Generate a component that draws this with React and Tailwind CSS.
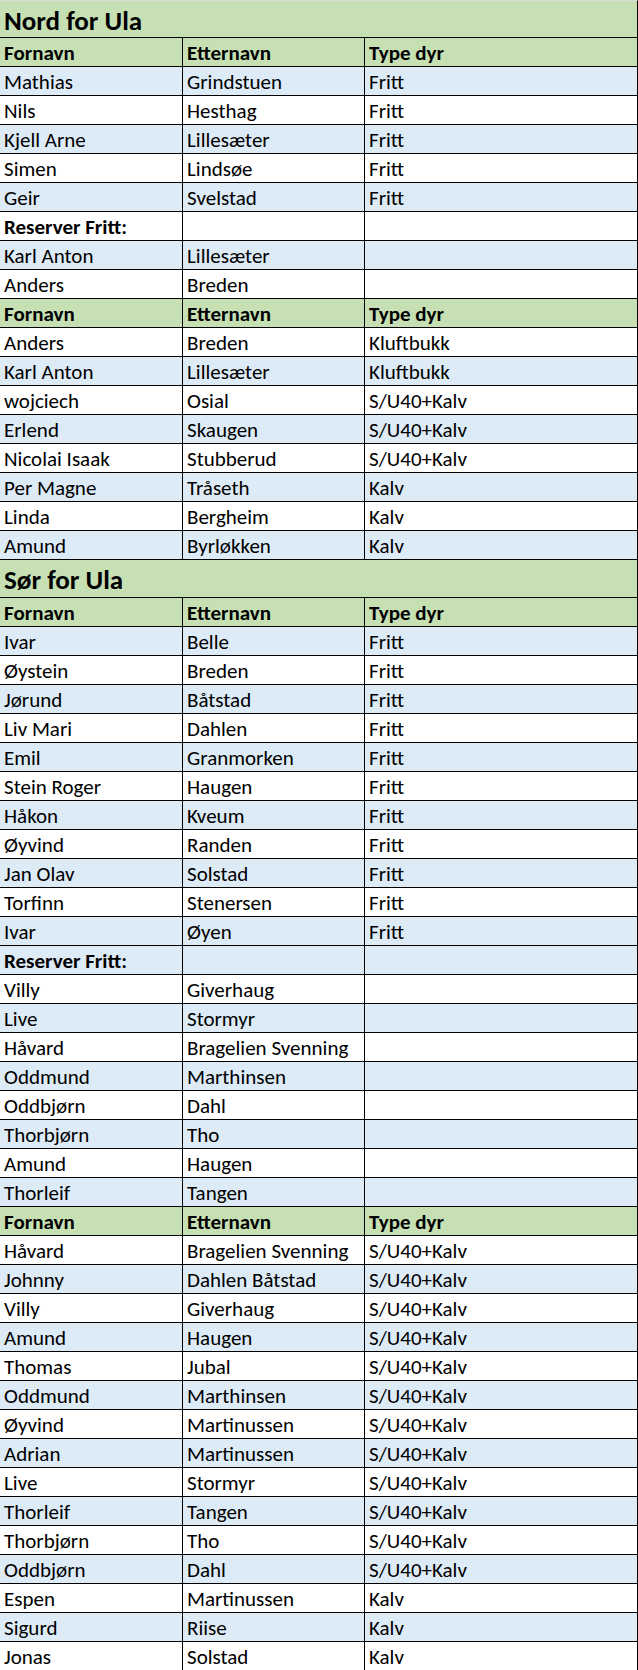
import React from "react";

const nord = [
  { type: "head" },
  { a: "Mathias", b: "Grindstuen", c: "Fritt", bg: "blue" },
  { a: "Nils", b: "Hesthag", c: "Fritt" },
  { a: "Kjell Arne", b: "Lillesæter", c: "Fritt", bg: "blue" },
  { a: "Simen", b: "Lindsøe", c: "Fritt" },
  { a: "Geir", b: "Svelstad", c: "Fritt", bg: "blue" },
  { a: "Reserver Fritt:", b: "", c: "", bold: true },
  { a: "Karl Anton", b: "Lillesæter", c: "", bg: "blue" },
  { a: "Anders", b: "Breden", c: "" },
  { type: "head" },
  { a: "Anders", b: "Breden", c: "Kluftbukk" },
  { a: "Karl Anton", b: "Lillesæter", c: "Kluftbukk", bg: "blue" },
  { a: "wojciech", b: "Osial", c: "S/U40+Kalv" },
  { a: "Erlend", b: "Skaugen", c: "S/U40+Kalv", bg: "blue" },
  { a: "Nicolai Isaak", b: "Stubberud", c: "S/U40+Kalv" },
  { a: "Per Magne", b: "Tråseth", c: "Kalv", bg: "blue" },
  { a: "Linda", b: "Bergheim", c: "Kalv" },
  { a: "Amund", b: "Byrløkken", c: "Kalv", bg: "blue" },
];

const sor = [
  { type: "head" },
  { a: "Ivar", b: "Belle", c: "Fritt", bg: "blue" },
  { a: "Øystein", b: "Breden", c: "Fritt" },
  { a: "Jørund", b: "Båtstad", c: "Fritt", bg: "blue" },
  { a: "Liv Mari", b: "Dahlen", c: "Fritt" },
  { a: "Emil", b: "Granmorken", c: "Fritt", bg: "blue" },
  { a: "Stein Roger", b: "Haugen", c: "Fritt" },
  { a: "Håkon", b: "Kveum", c: "Fritt", bg: "blue" },
  { a: "Øyvind", b: "Randen", c: "Fritt" },
  { a: "Jan Olav", b: "Solstad", c: "Fritt", bg: "blue" },
  { a: "Torfinn", b: "Stenersen", c: "Fritt" },
  { a: "Ivar", b: "Øyen", c: "Fritt", bg: "blue" },
  { a: "Reserver Fritt:", b: "", c: "", bold: true, bg: "blue" },
  { a: "Villy", b: "Giverhaug", c: "" },
  { a: "Live", b: "Stormyr", c: "", bg: "blue" },
  { a: "Håvard", b: "Bragelien Svenning", c: "" },
  { a: "Oddmund", b: "Marthinsen", c: "", bg: "blue" },
  { a: "Oddbjørn", b: "Dahl", c: "" },
  { a: "Thorbjørn", b: "Tho", c: "", bg: "blue" },
  { a: "Amund", b: "Haugen", c: "" },
  { a: "Thorleif", b: "Tangen", c: "", bg: "blue" },
  { type: "head" },
  { a: "Håvard", b: "Bragelien Svenning", c: "S/U40+Kalv" },
  { a: "Johnny", b: "Dahlen Båtstad", c: "S/U40+Kalv", bg: "blue" },
  { a: "Villy", b: "Giverhaug", c: "S/U40+Kalv" },
  { a: "Amund", b: "Haugen", c: "S/U40+Kalv", bg: "blue" },
  { a: "Thomas", b: "Jubal", c: "S/U40+Kalv" },
  { a: "Oddmund", b: "Marthinsen", c: "S/U40+Kalv", bg: "blue" },
  { a: "Øyvind", b: "Martinussen", c: "S/U40+Kalv" },
  { a: "Adrian", b: "Martinussen", c: "S/U40+Kalv", bg: "blue" },
  { a: "Live", b: "Stormyr", c: "S/U40+Kalv" },
  { a: "Thorleif", b: "Tangen", c: "S/U40+Kalv", bg: "blue" },
  { a: "Thorbjørn", b: "Tho", c: "S/U40+Kalv" },
  { a: "Oddbjørn", b: "Dahl", c: "S/U40+Kalv", bg: "blue" },
  { a: "Espen", b: "Martinussen", c: "Kalv" },
  { a: "Sigurd", b: "Riise", c: "Kalv", bg: "blue" },
  { a: "Jonas", b: "Solstad", c: "Kalv" },
];

function Cell({ children, bold }) {
  return (
    <div
      className={
        "h-[29px] border-r border-b border-black flex items-center pl-1 pt-[2px] whitespace-nowrap overflow-hidden " +
        (bold ? "font-bold" : "")
      }
    >
      {children}
    </div>
  );
}

function Row({ row }) {
  if (row.type === "head") {
    return (
      <div className="grid grid-cols-[183px_182px_273px] bg-[#c6e0b4]">
        <Cell bold>Fornavn</Cell>
        <Cell bold>Etternavn</Cell>
        <Cell bold>Type dyr</Cell>
      </div>
    );
  }
  return (
    <div
      className={
        "grid grid-cols-[183px_182px_273px] " +
        (row.bg === "blue" ? "bg-[#ddebf7]" : "bg-white")
      }
    >
      <Cell bold={row.bold}>{row.a}</Cell>
      <Cell>{row.b}</Cell>
      <Cell>{row.c}</Cell>
    </div>
  );
}

function Section({ title, rows, first }) {
  return (
    <>
      <div
        className={
          "h-[38px] bg-[#c6e0b4] border-r border-b border-black flex items-center pl-1 pt-[2px] text-[27px] font-bold " +
          (first ? "border-t border-t-[#d9d9d9]" : "")
        }
      >
        {title}
      </div>
      {rows.map((row, i) => (
        <Row key={i} row={row} />
      ))}
    </>
  );
}

export default function App() {
  return (
    <div
      className="w-[638px] bg-white text-black text-[21px] leading-none"
      style={{ fontFamily: "Carlito, Lato, 'Liberation Sans', sans-serif" }}
    >
      <Section title="Nord for Ula" rows={nord} first />
      <Section title="Sør for Ula" rows={sor} />
    </div>
  );
}
